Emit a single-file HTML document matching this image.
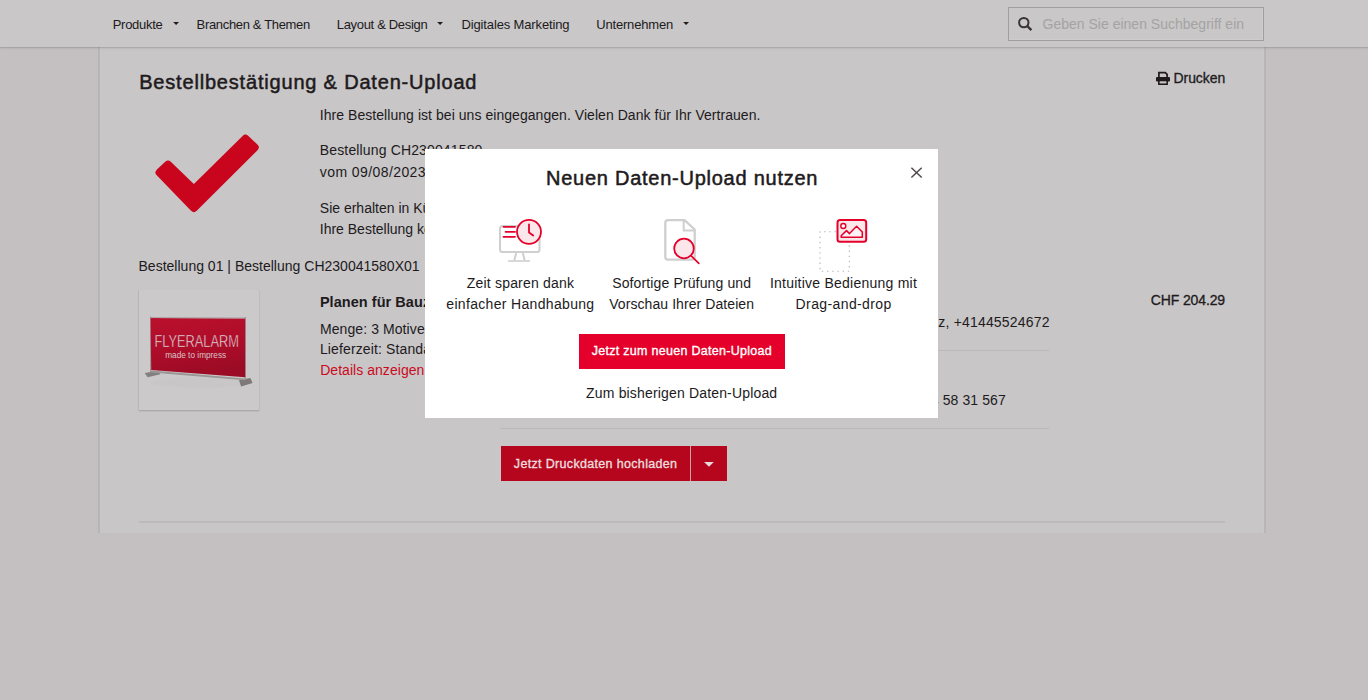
<!DOCTYPE html>
<html lang="de">
<head>
<meta charset="utf-8">
<title>Bestellbestätigung & Daten-Upload</title>
<style>
*{box-sizing:border-box;margin:0;padding:0}
html,body{width:1368px;height:700px;overflow:hidden}
body{background:#c4c0c1;font-family:"Liberation Sans",sans-serif;color:#211a1c;position:relative}
.x{position:absolute;white-space:pre}
.a{position:absolute}
#nav{left:0;top:0;width:1368px;height:47px;background:#c9c7c8;box-shadow:0 1px 1px rgba(110,95,95,.20),0 1px 3px rgba(0,0,0,.08);z-index:2}
.caret{position:absolute;width:0;height:0;border-left:2.7px solid transparent;border-right:2.7px solid transparent;border-top:3px solid #211a1c;z-index:3}
#search{left:1008px;top:7px;width:256px;height:34px;border:1px solid #a29e9f;background:#c9c7c8;box-shadow:inset -1px -1px 0 #cecccd;z-index:3}
#panel{left:98px;top:47px;width:1168px;height:486px;background:#c8c6c7;border-left:2px solid #b9b5b6;border-right:2px solid #b9b5b6;box-shadow:inset 1px 0 0 #cac8c8,inset -1px 0 0 #cac8c8}
.hr{position:absolute;height:1px;background:#bab8b8}
#modal{left:425px;top:149px;width:513px;height:269px;background:#fff;z-index:5}
</style>
</head>
<body>
<div id="nav" class="a"></div>
<svg class="a" style="left:173.1px;top:22px;z-index:3" width="7" height="4" viewBox="0 0 7 4"><path d="M0.2 0H6L3.1 3.1Z" fill="#211a1c"/></svg>
<svg class="a" style="left:437.2px;top:22px;z-index:3" width="7" height="4" viewBox="0 0 7 4"><path d="M0.2 0H6L3.1 3.1Z" fill="#211a1c"/></svg>
<svg class="a" style="left:682.8px;top:22px;z-index:3" width="7" height="4" viewBox="0 0 7 4"><path d="M0.2 0H6L3.1 3.1Z" fill="#211a1c"/></svg>
<div id="search" class="a">
  <svg class="a" style="left:9px;top:8px" width="16" height="16" viewBox="0 0 16 16"><circle cx="5.8" cy="6.6" r="4.7" fill="none" stroke="#3a3234" stroke-width="2"/><path d="M9.2 10L13.4 14.2" stroke="#3a3234" stroke-width="2.4"/></svg>
</div>

<div id="panel" class="a"></div>

<!-- printer icon -->
<svg class="a" style="left:1155px;top:71px" width="16" height="15" viewBox="0 0 16 15" fill="none"><path d="M3.9 6.2V1.6H10.3L12.1 3.4V6.2" stroke="#211a1c" stroke-width="1.7"/><rect x="1" y="6" width="14" height="4.6" rx="1.1" fill="#211a1c"/><path d="M3.9 9.6V13.1H12.1V9.6" stroke="#211a1c" stroke-width="1.7"/><rect x="4.75" y="10.6" width="6.5" height="1.65" fill="#c8c6c7"/></svg>

<!-- check mark -->
<svg class="a" style="left:150px;top:130px" width="115" height="90" viewBox="150 130 115 90"><path d="M159.6 172.5L168 164.6L193.9 189.66L245.4 138.8L254.7 147.4L193.9 207.9Z" fill="#c9051d" stroke="#c9051d" stroke-width="8" stroke-linejoin="round"/></svg>

<!-- product image -->
<div class="a" style="left:139px;top:290px;width:120px;height:120px;background:#cbc9c9;box-shadow:0 1px 1.5px rgba(40,20,25,.22),-1px 0 0 rgba(40,20,25,.04)">
<svg width="120" height="120" viewBox="0 0 120 120">
  <defs><linearGradient id="bg" x1="0" y1="0" x2="0.25" y2="1"><stop offset="0" stop-color="#ba102d"/><stop offset=".55" stop-color="#ae0d29"/><stop offset="1" stop-color="#9c0b25"/></linearGradient></defs>
  <ellipse cx="62" cy="93" rx="50" ry="4.5" fill="#c8c6c6"/>
  <polygon points="5.7,83 19.5,80.7 21.4,84.3 8.6,87.3" fill="#837f7f"/>
  <polygon points="100,90.2 111.4,88 113.6,93 102.1,96.4" fill="#7d7979"/>
  <polygon points="12,80.5 106,88.5 106,90.3 12,82.4" fill="#9a9696"/>
  <path d="M11.6 26.5V82M106.4 27V90" stroke="#9c9898" stroke-width="1.2" fill="none"/>
  <polygon points="11.6,28 106.2,28.4 106.2,87.2 12.2,80" fill="url(#bg)"/>
  <path d="M11.2 27.6L106.6 28" stroke="#a89a9c" stroke-width="0.9" fill="none"/>
  <text x="15.4" y="57.1" font-family="Liberation Sans, sans-serif" font-size="16.6" fill="#e6dfe0" textLength="84.6" lengthAdjust="spacingAndGlyphs" stroke="#a80d28" stroke-width=".45">FLYERALARM</text>
  <text x="26.2" y="67.9" font-family="Liberation Sans, sans-serif" font-size="8.8" fill="#d8c4c7" textLength="61" lengthAdjust="spacingAndGlyphs">made to impress</text>
</svg>
</div>

<div class="hr" style="left:500px;top:350px;width:549px"></div>
<div class="hr" style="left:500px;top:428px;width:549px"></div>

<div class="a" style="left:501px;top:446px;width:189px;height:35px;background:#b6061d"></div>
<div class="a" style="left:690px;top:446px;width:1px;height:35px;background:#d3a3aa"></div>
<div class="a" style="left:691px;top:446px;width:36px;height:35px;background:#b6061d"><svg class="a" style="left:13px;top:16px" width="10" height="5" viewBox="0 0 10 5"><path d="M0.1 0H9.8L4.95 4.8Z" fill="#e6dcdd"/></svg></div>

<div class="hr" style="left:139px;top:521px;width:1086px;height:2px;background:#bebabb"></div>

<div id="modal" class="a"></div>
<svg class="a" style="left:910px;top:166px;z-index:6" width="13" height="13" viewBox="0 0 13 13"><path d="M1.4 1.7L11.7 11.5M11.7 1.7L1.4 11.5" stroke="#4f494b" stroke-width="1.5"/></svg>

<svg class="a" style="left:425px;top:149px;z-index:6" width="513" height="269" viewBox="425 149 513 269" fill="none">
  <!-- icon 1: monitor + clock -->
  <rect x="500" y="226" width="39.5" height="26" rx="2.5" stroke="#cfcfcf" stroke-width="2"/>
  <path d="M516.3 252.5L514.3 260.5M522.7 252.5L524.7 260.5" stroke="#cfcfcf" stroke-width="2"/>
  <path d="M508 261H530" stroke="#cfcfcf" stroke-width="1.6"/>
  <path d="M503.5 226.8H515M505.5 231.8H515M503.5 236.8H515" stroke="#e4002a" stroke-width="1.8" stroke-linecap="round"/>
  <circle cx="529" cy="231.8" r="12" fill="#fbe6e9" stroke="#e4002a" stroke-width="1.8"/>
  <path d="M529 224.5V232.6L533.2 235.6" stroke="#e4002a" stroke-width="1.8" stroke-linecap="round" stroke-linejoin="round"/>
  <!-- icon 2: document + magnifier -->
  <path d="M668 220.2H684.5L694.7 229.5V256.8Q694.7 259.6 691.9 259.6H668Q665.3 259.6 665.3 256.8V223Q665.3 220.2 668 220.2Z" stroke="#cfcfcf" stroke-width="2.3" stroke-linejoin="round"/>
  <path d="M683.7 221V230.5H694" stroke="#cfcfcf" stroke-width="2"/>
  <circle cx="684" cy="248.5" r="9.8" fill="#fbe6e9" stroke="#e4002a" stroke-width="1.8"/>
  <path d="M691.2 255.8L698.8 263.3" stroke="#e4002a" stroke-width="1.7" stroke-linecap="round"/>
  <!-- icon 3: image + dotted placeholder -->
  <path d="M836 231.8H820V271.2H849.3V243.5" stroke="#b4b4b4" stroke-width="1.1" stroke-dasharray="1.4 3.8"/>
  <rect x="837.5" y="220" width="28.7" height="21.7" rx="2.5" fill="#fbe6e9" stroke="#e4002a" stroke-width="2"/>
  <path d="M841.2 237.3V235.8L846.5 230.6L849.5 233.6L856.6 226.2L862.3 232V237.3Z" fill="#fdf3f4" stroke="#e4002a" stroke-width="1.5" stroke-linejoin="round"/>
  <circle cx="843.3" cy="226" r="2.5" fill="#fff" stroke="#e4002a" stroke-width="1.4"/>
</svg>


<div class="a" style="left:579px;top:334px;width:206px;height:35px;background:#e4002a;z-index:6"></div>

<div class="x" style="font-size:13px;line-height:13px;top:18.0px;letter-spacing:-0.281px;color:#211a1c;z-index:3;left:112.7px;">Produkte</div>
<div class="x" style="font-size:13px;line-height:13px;top:18.0px;letter-spacing:-0.335px;color:#211a1c;z-index:3;left:196.6px;">Branchen &amp; Themen</div>
<div class="x" style="font-size:13px;line-height:13px;top:18.0px;letter-spacing:-0.327px;color:#211a1c;z-index:3;left:336.8px;">Layout &amp; Design</div>
<div class="x" style="font-size:13px;line-height:13px;top:18.0px;letter-spacing:-0.139px;color:#211a1c;z-index:3;left:461.5px;">Digitales Marketing</div>
<div class="x" style="font-size:13px;line-height:13px;top:18.0px;letter-spacing:-0.171px;color:#211a1c;z-index:3;left:596.2px;">Unternehmen</div>
<div class="x" style="font-size:14px;line-height:14px;top:17.1px;letter-spacing:0.008px;color:#a5a3a3;z-index:3;left:1042.5px;">Geben Sie einen Suchbegriff ein</div>
<div class="x" style="font-size:20px;line-height:20px;top:72.1px;letter-spacing:0.812px;color:#211a1c;-webkit-text-stroke:0.5px #211a1c;left:139.2px;">Bestellbestätigung &amp; Daten-Upload</div>
<div class="x" style="font-size:14px;line-height:14px;top:71.4px;letter-spacing:-0.063px;color:#211a1c;-webkit-text-stroke:0.3px #211a1c;left:1173.5px;">Drucken</div>
<div class="x" style="font-size:14px;line-height:14px;top:107.7px;letter-spacing:0.05px;color:#211a1c;left:319.8px;">Ihre Bestellung ist bei uns eingegangen. Vielen Dank für Ihr Vertrauen.</div>
<div class="x" style="font-size:14px;line-height:14px;top:143.1px;letter-spacing:0.142px;color:#211a1c;left:319.8px;">Bestellung CH230041580</div>
<div class="x" style="font-size:14px;line-height:14px;top:164.7px;letter-spacing:0.414px;color:#211a1c;left:319.8px;">vom 09/08/2023</div>
<div class="x" style="font-size:14px;line-height:14px;top:200.5px;letter-spacing:-0.002px;color:#211a1c;left:319.8px;">Sie erhalten in Kürze eine Bestätigung per E-Mail.</div>
<div class="x" style="font-size:14px;line-height:14px;top:222.1px;letter-spacing:-0.006px;color:#211a1c;left:319.8px;">Ihre Bestellung können Sie jederzeit einsehen.</div>
<div class="x" style="font-size:14px;line-height:14px;top:259.2px;letter-spacing:0.009px;color:#211a1c;left:138.5px;">Bestellung 01 | Bestellung CH230041580X01</div>
<div class="x" style="font-size:14.5px;line-height:14.5px;top:295.3px;letter-spacing:0.048px;color:#211a1c;font-weight:700;left:319.9px;">Planen für Bauzäune</div>
<div class="x" style="font-size:14px;line-height:14px;top:321.9px;letter-spacing:0.093px;color:#211a1c;left:319.9px;">Menge: 3 Motive</div>
<div class="x" style="font-size:14px;line-height:14px;top:342.1px;letter-spacing:0.131px;color:#211a1c;left:319.9px;">Lieferzeit: Standard</div>
<div class="x" style="font-size:14px;line-height:14px;top:363.1px;letter-spacing:0.043px;color:#cb0a1e;left:320.2px;">Details anzeigen</div>
<div class="x" style="font-size:14px;line-height:14px;top:292.9px;letter-spacing:-0.128px;color:#211a1c;-webkit-text-stroke:0.3px #211a1c;left:1150.8px;">CHF 204.29</div>
<div class="x" style="font-size:14px;line-height:14px;top:314.5px;letter-spacing:0.179px;color:#211a1c;right:318.4px;">Lieferadresse: Musterstrasse 1, 8000 Zürich, Schweiz, +41445524672</div>
<div class="x" style="font-size:14px;line-height:14px;top:392.7px;letter-spacing:0.089px;color:#211a1c;right:362.2px;">Rechnungsadresse: +41 44 58 31 567</div>
<div class="x" style="font-size:12.5px;line-height:12.5px;top:457.8px;letter-spacing:0.332px;color:#ecdcdf;-webkit-text-stroke:0.35px #ecdcdf;left:513.8px;">Jetzt Druckdaten hochladen</div>
<div class="x" style="font-size:20px;line-height:20px;top:167.6px;letter-spacing:0.747px;color:#211a1c;-webkit-text-stroke:0.5px #211a1c;z-index:6;left:546.0px;">Neuen Daten-Upload nutzen</div>
<div class="x" style="font-size:14px;line-height:14px;top:275.5px;letter-spacing:0.188px;color:#211a1c;z-index:6;left:466.8px;">Zeit sparen dank</div>
<div class="x" style="font-size:14px;line-height:14px;top:296.7px;letter-spacing:0.326px;color:#211a1c;z-index:6;left:446.3px;">einfacher Handhabung</div>
<div class="x" style="font-size:14px;line-height:14px;top:275.5px;letter-spacing:0.132px;color:#211a1c;z-index:6;left:612.2px;">Sofortige Prüfung und</div>
<div class="x" style="font-size:14px;line-height:14px;top:296.7px;letter-spacing:0.077px;color:#211a1c;z-index:6;left:609.2px;">Vorschau Ihrer Dateien</div>
<div class="x" style="font-size:14px;line-height:14px;top:275.5px;letter-spacing:0.242px;color:#211a1c;z-index:6;left:769.9px;">Intuitive Bedienung mit</div>
<div class="x" style="font-size:14px;line-height:14px;top:296.7px;letter-spacing:0.388px;color:#211a1c;z-index:6;left:795.6px;">Drag-and-drop</div>
<div class="x" style="font-size:12.5px;line-height:12.5px;top:345.0px;letter-spacing:0.285px;color:#ffffff;-webkit-text-stroke:0.35px #ffffff;z-index:7;left:591.7px;">Jetzt zum neuen Daten-Upload</div>
<div class="x" style="font-size:14px;line-height:14px;top:385.8px;letter-spacing:0.164px;color:#211a1c;z-index:6;left:586.1px;">Zum bisherigen Daten-Upload</div>
</body>
</html>
